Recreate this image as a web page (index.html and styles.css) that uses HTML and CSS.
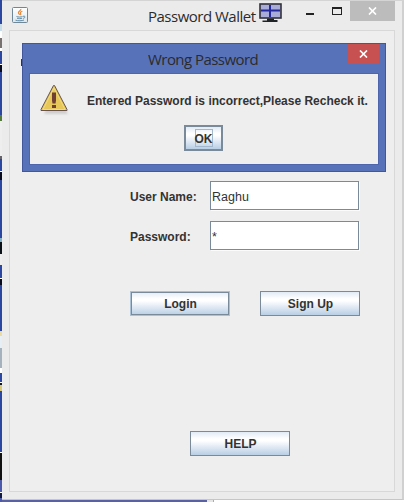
FILE: index.html
```html
<!DOCTYPE html>
<html lang="en">
<head>
<meta charset="utf-8">
<title>Password Wallet</title>
<link rel="stylesheet" href="styles.css">
</head>
<body>
<div class="desktop">
  <main class="window">
    <header class="titlebar">
      <svg class="java" width="16" height="16" viewBox="0 0 16 16">
        <defs><linearGradient id="tile" x1="0" y1="0" x2="0" y2="1"><stop offset="0" stop-color="#fff"/><stop offset="1" stop-color="#dce6eb"/></linearGradient></defs>
        <rect x=".5" y=".5" width="15" height="15" rx="1" fill="url(#tile)" stroke="#6f8796"/>
        <path d="M8.800 2c.6 1.500-2.800 2.300-2.400 3.800.2.900 1 1.200 1.300 2M10.400 4.200c-1.200.4-2.400 1.100-1.900 2.100.4.700.6 1-.1 1.700" fill="none" stroke="#e58a3c" stroke-width="1.200"/>
        <path d="M4.500 9.500c1.500.7 4.500.7 6 0M5 11.200c1.500.6 3.800.6 5.200 0M3.500 13.200c2.500.8 6.500.7 8.500-.2M11 9.300c2.500-.8 2.700 1.500.2 2.100" fill="none" stroke="#55819f" stroke-width=".9"/>
      </svg>
      <h1 class="title">Password Wallet</h1>
      <svg class="monitor" width="23" height="20" viewBox="0 0 23 20">
        <rect x="1" y="1" width="21" height="14" fill="#a9abd8" stroke="#31313d" stroke-width="1.600"/>
        <path d="M11 2v12M2 7.500h19" stroke="#2429a0" stroke-width="2"/>
        <path d="M8 15.500h7V17h3.500v2h-15v-1.500H8z" fill="#202326"/>
      </svg>
      <span class="minimize"></span>
      <span class="maximize"></span>
      <span class="close">
        <svg width="9" height="8" viewBox="0 0 9 8"><path d="M1 .5l7 7M8 .5l-7 7" stroke="#fff" stroke-width="1.700"/></svg>
      </span>
    </header>
    <section class="content">
      <i class="mark"></i>
      <form class="form">
        <div class="row"><label class="label">User Name:</label><div class="field">Raghu</div></div>
        <div class="row"><label class="label">Password:</label><div class="field">*</div></div>
        <div class="actions">
          <button type="button" class="button focused">Login</button>
          <button type="button" class="button">Sign Up</button>
        </div>
        <button type="button" class="button help">HELP</button>
      </form>
    </section>
  </main>
  <section class="dialog">
    <header class="dialog-bar">
      <h2 class="title">Wrong Password</h2>
      <span class="dialog-close">
        <svg width="9" height="8" viewBox="0 0 9 8"><path d="M1 .5l7 7M8 .5l-7 7" stroke="#fff" stroke-width="1.700"/></svg>
      </span>
    </header>
    <div class="dialog-body">
      <div class="message">
        <svg class="warning" width="32" height="32" viewBox="0 0 32 32">
          <path d="M16 5L29 30H5z" fill="#bbb" class="shade"/>
          <path d="M14.500 1.500h1L28 25.500v1H2v-1z" fill="#e7c65a" stroke="#66524e"/>
          <path d="M15 4L26 25.500H4z" fill="none" stroke="#f1dc7a"/>
          <path d="M13 8.500h4v8l-.5 3h-3l-.5-3zM13 21h4v3h-4z" fill="#703e32"/>
        </svg>
        <p class="text">Entered Password is incorrect,Please Recheck it.</p>
      </div>
      <button type="button" class="button ok"><span>OK</span></button>
    </div>
  </section>
</div>
</body>
</html>
```
FILE: styles.css
```css
* { box-sizing: border-box; }
body { margin: 0; overflow: hidden; font: bold 12px "Liberation Sans", Arial, sans-serif; color: #333; }
h1, h2, p { margin: 0; }
svg { display: block; flex: none; }
.desktop {
  position: relative; width: 404px; height: 502px; padding-left: 2px;
  background:
    linear-gradient(to bottom, #2c479f 0 24px, #c7dcea 24px 31px, #fff 31px 38px, #77716f 38px 48px, #fff 48px 51px, #2c479f 51px 64px, #fff 64px 65px, #060920 65px 72px, #2c479f 72px 115px, #527a38 115px 121px, #eee 121px 156px, #65636c 156px 159px, #2c479f 159px 171px, #fff 171px 172px, #080b20 172px 180px, #2c479f 180px 238px, #7fb0c5 238px 242px, #0a1119 242px 254px, #eee 254px 265px, #2c479f 265px 278px, #fff 278px 279px, #080b20 279px 285px, #2c479f 285px 331px, #eadba5 331px 336px, #e5eff5 336px 348px, #a5b2bd 348px 368px, #fff 368px 373px, #2c479f 373px 382px, #fff 382px 383px, #101522 383px 385px, #d8c879 385px 391px, #2c479f 391px 452px, #fff 452px 453px, #111 453px 480px, #4b5aaa 480px 492px, #fff 492px 493px, #111a43 493px 498px, #4b5aaa 498px) 0 0 / 2px 502px no-repeat,
    linear-gradient(to right, #5961a6 207px, #e6e6e6 207px 213px, #aaa 213px 214px, #fff 214px);
}
.window {
  display: flex; flex-direction: column; width: 402px; height: 500px; padding: 0 7px 7px;
  border-top: 1px solid #d4d4d4; border-right: 2px solid #d0d0d0; border-bottom: 1px solid #c6c6c6;
  background: #ebebeb;
}
.titlebar { display: flex; height: 29px; padding-left: 3px; flex: none; }
.java { margin-top: 6px; }
.title { font: 15px/20px "Open Sans", "Noto Sans", sans-serif; color: #2b2b2b; white-space: nowrap; letter-spacing: -.5px; }
.titlebar .title { width: 110px; margin: 5px 0 0 120px; }
.monitor { margin: 2px 0 0 1px; }
.minimize { width: 8px; height: 2px; margin: 12px 0 0 24px; background: #222; }
.maximize { width: 10px; height: 8px; margin: 6px 0 0 18px; border: 1px solid #222; border-top-width: 2px; }
.close { display: flex; align-items: center; justify-content: center; width: 45px; height: 20px; margin-left: 8px; background: #bcbcbc; }
.content { display: flex; flex: 1; width: 386px; border: 1px solid #d8d8d8; background: #eee; }
.mark { width: 2px; height: 7px; margin: 28px 0 0 11px; background: #4a2d1c; }
.form { display: flex; flex-direction: column; margin: 150px 0 0 107px; width: 230px; }
.row { display: flex; height: 30px; margin-bottom: 10px; }
.label { width: 80px; line-height: 33px; white-space: nowrap; }
.field {
  width: 149px; height: 29px; padding-left: 1px; border: 1px solid #7a8a99; background: #fff;
  box-shadow: 1px 1px #fbfbfb; font-size: 12.500px; font-weight: normal; line-height: 30px;
}
.actions { display: flex; justify-content: space-between; margin-top: 30px; }
.button {
  width: 100px; height: 25px; padding: 0 0 0 1px; border: 1px solid #7a8a99; color: #333; font: inherit;
  background: linear-gradient(#e1ebf4, #fff 30%, #fff 38%, #b8cfe5);
}
.focused { border-color: #abc1d5; box-shadow: inset 0 0 0 1px #7a8a99; }
.help { margin: 115px 0 0 60px; }
.dialog { position: absolute; left: 22px; top: 43px; width: 364px; height: 129px; padding: 0 6px 7px; border: 1px solid #42569b; background: #5872b9; }
.dialog-bar { display: flex; justify-content: space-between; height: 29px; padding-left: 119px; }
.dialog-bar .title { margin-top: 5px; letter-spacing: -.55px; }
.dialog-close { display: flex; align-items: center; justify-content: center; width: 31px; height: 20px; background: #c75050; }
.dialog-body { height: 92px; padding: 10px 0 0 9px; border: 1px solid #4c65ac; background: #eee; }
.message { display: flex; height: 40px; }
.shade { opacity: .6; filter: blur(1px); }
.text { margin: 10px 0 0 16px; line-height: 14px; white-space: nowrap; }
.ok { display: block; width: 39px; height: 26px; padding: 0; margin: 1px 0 0 145px; border: 2px solid #7a8a99; }
.ok span { display: flex; justify-content: center; width: 18px; height: 18px; margin: 0 auto; line-height: 18px; border: 1px solid #a3b8cc; }
```
